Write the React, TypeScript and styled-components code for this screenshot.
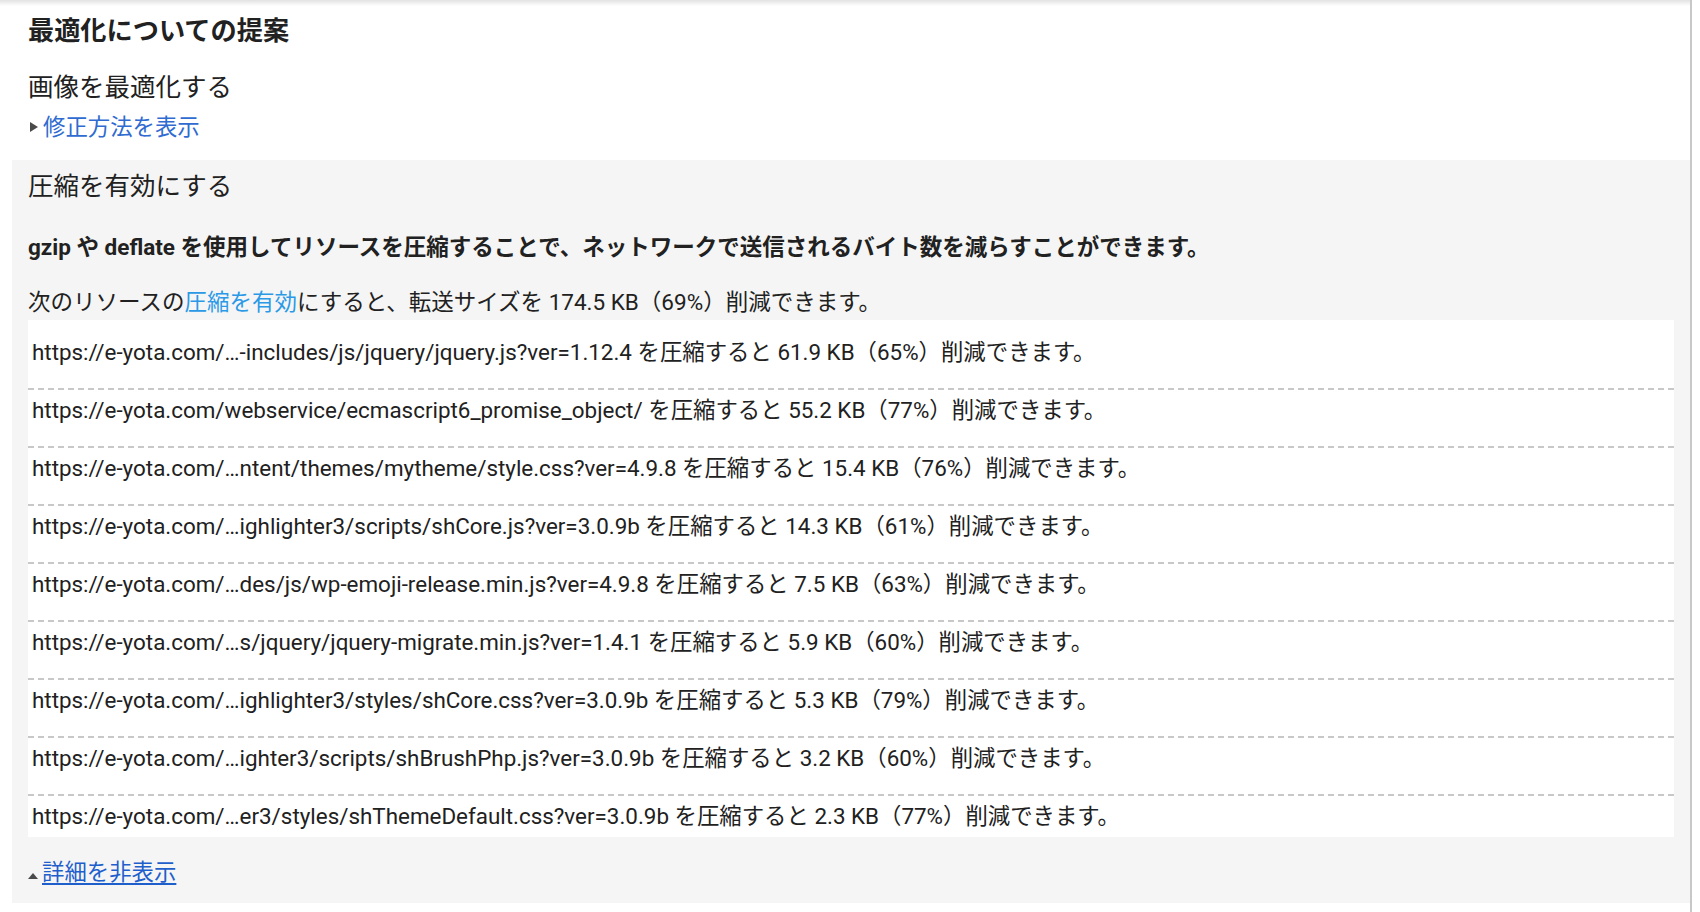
import styled, { createGlobalStyle } from "styled-components";

const GlobalStyle = createGlobalStyle`
  html, body {
    margin: 0;
    background: #fff;
  }
  body {
    font-family: Roboto, "Noto Sans CJK JP", sans-serif;
    color: #212121;
  }
`;

const Page = styled.div`
  width: 1692px;
  min-height: 912px;
  box-sizing: border-box;
  padding: 13px 0 0 12px;
  border-right: 2px solid #c8c8c8;
  background: linear-gradient(to bottom, #e2e2e2 0, #ffffff 6px) no-repeat;
`;

const TopBlock = styled.div`
  padding: 0 16px 17px;
`;

const Title = styled.h2`
  margin: 0;
  font-size: 26.2px;
  line-height: 36px;
  font-weight: 700;
`;

const RuleTitle = styled.h3<{ $gap?: number }>`
  margin: ${(p) => p.$gap ?? 0}px 0 0;
  font-size: 25.5px;
  line-height: 36px;
  font-weight: 400;
`;

const Toggle = styled.div<{ $gap: number }>`
  display: flex;
  align-items: center;
  margin-top: ${(p) => p.$gap}px;
  font-size: 22.4px;
  line-height: 32px;
`;

const ArrowRight = styled.span`
  flex: none;
  width: 0;
  height: 0;
  margin: 0 5px 0 2px;
  border-left: 8px solid #4a4a4a;
  border-top: 5px solid transparent;
  border-bottom: 5px solid transparent;
`;

const ArrowUp = styled.span`
  flex: none;
  width: 0;
  height: 0;
  margin: 8px 4px 0 0;
  border-bottom: 6px solid #4a4a4a;
  border-left: 5.5px solid transparent;
  border-right: 5.5px solid transparent;
`;

const Link = styled.a<{ $tone: string; $underline?: boolean }>`
  color: ${(p) => p.$tone};
  text-decoration: ${(p) => (p.$underline ? "underline" : "none")};
  text-underline-offset: 3px;
  cursor: pointer;
`;

const Section = styled.section`
  background: #f5f5f5;
  padding: 8px 16px 15px;
`;

const Lead = styled.p`
  margin: 27px 0 0;
  font-size: 22.5px;
  line-height: 32px;
  font-weight: 700;
`;

const Summary = styled.p`
  margin: 23px 0 0;
  font-size: 22.5px;
  line-height: 32px;
`;

const List = styled.div`
  margin-top: 2px;
  padding-top: 12px;
  background: #fff;
`;

const Row = styled.div`
  padding: 6px 4px 22px;
  font-size: 22.4px;
  line-height: 28px;
  white-space: nowrap;
  border-bottom: 2px solid transparent;
  border-image: repeating-linear-gradient(to right, #c8c8c8 0 6px, transparent 6px 10px) 0 0 2 0 / 0 0 2px 0;

  &:last-child {
    padding-bottom: 7px;
    border-bottom: none;
    border-image: none;
  }
`;

const rows = [
  { url: "https://e-yota.com/…-includes/js/jquery/jquery.js?ver=1.12.4", kb: "61.9", pct: 65 },
  { url: "https://e-yota.com/webservice/ecmascript6_promise_object/", kb: "55.2", pct: 77 },
  { url: "https://e-yota.com/…ntent/themes/mytheme/style.css?ver=4.9.8", kb: "15.4", pct: 76 },
  { url: "https://e-yota.com/…ighlighter3/scripts/shCore.js?ver=3.0.9b", kb: "14.3", pct: 61 },
  { url: "https://e-yota.com/…des/js/wp-emoji-release.min.js?ver=4.9.8", kb: "7.5", pct: 63 },
  { url: "https://e-yota.com/…s/jquery/jquery-migrate.min.js?ver=1.4.1", kb: "5.9", pct: 60 },
  { url: "https://e-yota.com/…ighlighter3/styles/shCore.css?ver=3.0.9b", kb: "5.3", pct: 79 },
  { url: "https://e-yota.com/…ighter3/scripts/shBrushPhp.js?ver=3.0.9b", kb: "3.2", pct: 60 },
  { url: "https://e-yota.com/…er3/styles/shThemeDefault.css?ver=3.0.9b", kb: "2.3", pct: 77 },
];

export default function App() {
  return (
    <>
      <GlobalStyle />
      <Page>
        <TopBlock>
          <Title>最適化についての提案</Title>
          <RuleTitle $gap={20}>画像を最適化する</RuleTitle>
          <Toggle $gap={6}>
            <ArrowRight />
            <Link $tone="#2f6bd0">修正方法を表示</Link>
          </Toggle>
        </TopBlock>
        <Section>
          <RuleTitle>圧縮を有効にする</RuleTitle>
          <Lead>
            gzip や deflate を使用してリソースを圧縮することで、ネットワークで送信されるバイト数を減らすことができます。
          </Lead>
          <Summary>
            次のリソースの<Link $tone="#2b9ae6">圧縮を有効</Link>にすると、転送サイズを 174.5 KB（69%）削減できます。
          </Summary>
          <List>
            {rows.map((r) => (
              <Row key={r.url}>
                {r.url} を圧縮すると {r.kb} KB（{r.pct}%）削減できます。
              </Row>
            ))}
          </List>
          <Toggle $gap={19}>
            <ArrowUp />
            <Link $tone="#1f5fcc" $underline>
              詳細を非表示
            </Link>
          </Toggle>
        </Section>
      </Page>
    </>
  );
}
